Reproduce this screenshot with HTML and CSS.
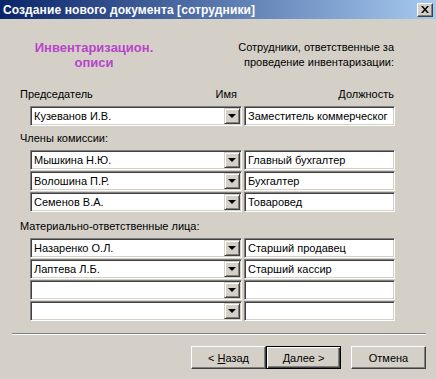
FILE: index.html
```html
<!DOCTYPE html>
<html lang="ru">
<head>
    <meta charset="UTF-8">
    <title>Создание нового документа [сотрудники]</title>
    <link rel="stylesheet" href="styles.css">
</head>
<body>

    <div class="window">

        <!-- Title bar -->
        <div class="titlebar">
            <span class="title">Создание нового документа [сотрудники]</span>
            <span class="close-btn">
                <svg width="8" height="7" viewBox="0 0 8 7">
                    <path d="M0 0h2l2 2.5L6 0h2L5 3.5 8 7H6L4 4.5 2 7H0l3-3.5z" fill="#000"/>
                </svg>
            </span>
        </div>

        <div class="content">

            <!-- Header -->
            <div class="header">
                <div class="doc-name">Инвентаризацион.<br>описи</div>
                <div class="hint">Сотрудники, ответственные за<br>проведение инвентаризации:</div>
            </div>

            <!-- Chairman -->
            <div class="col-heads">
                <div class="col-left">
                    <span>Председатель</span>
                    <span>Имя</span>
                </div>
                <span class="col-right">Должность</span>
            </div>
            <div class="field-list">
                <div class="field-row">
                    <div class="combo"><span class="combo-text">Кузеванов И.В.</span><span class="drop-btn"></span></div>
                    <div class="edit">Заместитель коммерческог</div>
                </div>
            </div>

            <!-- Commission -->
            <div class="group-label">Члены комиссии:</div>
            <div class="field-list">
                <div class="field-row">
                    <div class="combo"><span class="combo-text">Мышкина Н.Ю.</span><span class="drop-btn"></span></div>
                    <div class="edit">Главный бухгалтер</div>
                </div>
                <div class="field-row">
                    <div class="combo"><span class="combo-text">Волошина П.Р.</span><span class="drop-btn"></span></div>
                    <div class="edit">Бухгалтер</div>
                </div>
                <div class="field-row">
                    <div class="combo"><span class="combo-text">Семенов В.А.</span><span class="drop-btn"></span></div>
                    <div class="edit">Товаровед</div>
                </div>
            </div>

            <!-- Responsible persons -->
            <div class="group-label group-label-wide">Материально-ответственные лица:</div>
            <div class="field-list">
                <div class="field-row">
                    <div class="combo"><span class="combo-text">Назаренко О.Л.</span><span class="drop-btn"></span></div>
                    <div class="edit">Старший продавец</div>
                </div>
                <div class="field-row">
                    <div class="combo"><span class="combo-text">Лаптева Л.Б.</span><span class="drop-btn"></span></div>
                    <div class="edit">Старший кассир</div>
                </div>
                <div class="field-row">
                    <div class="combo"><span class="combo-text"></span><span class="drop-btn"></span></div>
                    <div class="edit"></div>
                </div>
                <div class="field-row">
                    <div class="combo"><span class="combo-text"></span><span class="drop-btn"></span></div>
                    <div class="edit"></div>
                </div>
            </div>
        </div>

        <div class="separator"></div>

        <!-- Buttons -->
        <div class="buttons">
            <button class="btn">&lt; <u>Н</u>азад</button>
            <button class="btn btn-default"><u>Д</u>алее &gt;</button>
            <button class="btn btn-cancel">Отмена</button>
        </div>

    </div>

</body>
</html>
```

FILE: styles.css
```css
/* --- Base --- */
body {
    margin: 0;
    background-color: #d4d0c8;
    font-family: 'Liberation Sans', Arial, sans-serif;
    font-size: 11px;
    color: #000;
}

.window {
    width: 436px;
    height: 379px;
    background-color: #d4d0c8;
    overflow: hidden;
}

/* --- Title bar --- */
.titlebar {
    height: 19px;
    display: flex;
    align-items: center;
    justify-content: space-between;
    padding: 0 3px 0 3px;
    background: linear-gradient(to right, #0a246a, #a6caf0);
}

.title {
    color: #fff;
    font-weight: 700;
    font-size: 12px;
    letter-spacing: 0.1px;
    white-space: nowrap;
}

.close-btn {
    width: 16px;
    height: 14px;
    box-sizing: border-box;
    display: flex;
    align-items: center;
    justify-content: center;
    background-color: #d4d0c8;
    border-top: 1px solid #fff;
    border-left: 1px solid #fff;
    border-right: 1px solid #404040;
    border-bottom: 1px solid #404040;
    box-shadow: inset -1px -1px #808080;
}

/* --- Content --- */
.content {
    padding: 21px 41px 0 20px;
}

.header {
    display: flex;
    justify-content: space-between;
    line-height: 15px;
}

.doc-name {
    width: 148px;
    text-align: center;
    font-size: 13px;
    font-weight: 700;
    color: #b845c9;
}

.hint {
    text-align: right;
    padding-right: 1px;
}

.col-heads {
    display: grid;
    grid-template-columns: 1fr 156px;
    line-height: 15px;
    margin-top: 17px;
}

.col-left {
    display: flex;
    justify-content: space-between;
    padding-right: 2px;
}

.col-right {
    text-align: right;
    padding-right: 1px;
}

.group-label {
    line-height: 15px;
    margin-top: 5px;
}

.group-label-wide {
    margin-top: 7px;
}

.field-list {
    display: grid;
    gap: 1px;
    margin: 4px 0 0 10px;
}

.field-row {
    display: grid;
    grid-template-columns: 212px 151px;
    gap: 2px;
}

/* --- Sunken controls --- */
.combo,
.edit {
    height: 20px;
    box-sizing: border-box;
    background-color: #fff;
    border-top: 1px solid #808080;
    border-left: 1px solid #808080;
    border-right: 1px solid #fff;
    border-bottom: 1px solid #fff;
    box-shadow: inset 1px 1px #404040, inset -1px -1px #d4d0c8;
    white-space: nowrap;
    overflow: hidden;
}

.combo {
    display: flex;
    align-items: center;
    padding: 1px 1px 1px 2px;
}

.combo-text {
    flex: 1;
    line-height: 16px;
    padding-left: 1px;
}

.edit {
    padding: 1px 2px 0 3px;
    line-height: 16px;
}

.drop-btn {
    width: 16px;
    height: 16px;
    box-sizing: border-box;
    position: relative;
    background-color: #d4d0c8;
    border-top: 1px solid #d4d0c8;
    border-left: 1px solid #d4d0c8;
    border-right: 1px solid #404040;
    border-bottom: 1px solid #404040;
    box-shadow: inset 1px 1px #fff, inset -1px -1px #808080;
}

.drop-btn::after {
    content: "";
    position: absolute;
    left: 3px;
    top: 5px;
    border-left: 4px solid transparent;
    border-right: 4px solid transparent;
    border-top: 4px solid #000;
}

/* --- Separator & buttons --- */
.separator {
    margin: 12px 10px 0 12px;
    border-top: 1px solid #808080;
    border-bottom: 1px solid #fff;
    height: 0;
}

.buttons {
    display: flex;
    justify-content: flex-end;
    padding: 11px 10px 0 0;
}

.btn {
    width: 75px;
    height: 23px;
    box-sizing: border-box;
    font-family: 'Liberation Sans', Arial, sans-serif;
    font-size: 11px;
    color: #000;
    background-color: #d4d0c8;
    padding: 0;
    border-top: 1px solid #fff;
    border-left: 1px solid #fff;
    border-right: 1px solid #404040;
    border-bottom: 1px solid #404040;
    box-shadow: inset -1px -1px #808080;
}

.btn-default {
    border: 1px solid #000;
    box-shadow: inset 1px 1px #fff, inset -1px -1px #404040, inset -2px -2px #808080;
}

.btn-cancel {
    margin-left: 10px;
}
```
